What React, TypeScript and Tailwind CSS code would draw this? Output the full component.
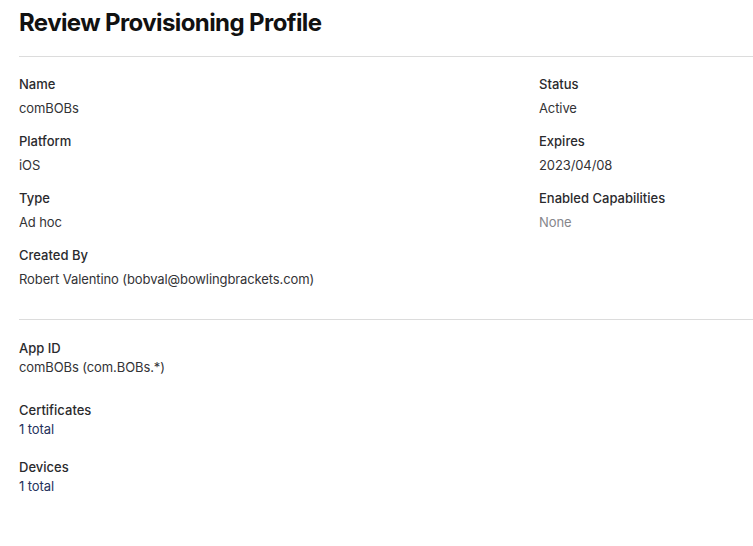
export default function App() {
  const font = { fontFamily: "Inter, 'Noto Sans', sans-serif" };
  const Item = ({ label, value, muted }: { label: string; value: string; muted?: boolean }) => (
    <div className="flex flex-col gap-[4px]">
      <div className="text-[13px] leading-[20px] font-medium text-[#2a2a2d]">{label}</div>
      <div className={`text-[13px] leading-[20px] tracking-[-0.1px] ${muted ? "text-[#86868b]" : "text-[#333336]"}`}>{value}</div>
    </div>
  );
  return (
    <div className="min-h-[546px] w-[753px] bg-white pl-[19px]" style={font}>
      <h1 className="pt-[9px] text-[24px] leading-[28px] font-bold text-[#111] tracking-[-0.6px]">Review Provisioning Profile</h1>
      <div className="mt-[19px] h-px bg-[#dcdcdc]" />
      <div className="mt-[17px] flex">
        <div className="w-[520px] flex flex-col gap-[13px]">
          <Item label="Name" value="comBOBs" />
          <Item label="Platform" value="iOS" />
          <Item label="Type" value="Ad hoc" />
          <Item label="Created By" value="Robert Valentino (bobval@bowlingbrackets.com)" />
        </div>
        <div className="flex flex-col gap-[13px]">
          <Item label="Status" value="Active" />
          <Item label="Expires" value="2023/04/08" />
          <Item label="Enabled Capabilities" value="None" muted />
        </div>
      </div>
      <div className="mt-[30px] h-px bg-[#dcdcdc]" />
      <div className="mt-[18px] flex flex-col">
        <div className="text-[13px] leading-[20px] font-medium text-[#2a2a2d]">App ID</div>
        <div className="text-[13px] leading-[19px] tracking-[-0.1px] text-[#333336]">comBOBs (com.BOBs.*)</div>
        <div className="mt-[23px] text-[13px] leading-[20px] font-medium text-[#2a2a2d]">Certificates</div>
        <div className="text-[13px] leading-[19px] tracking-[-0.1px] text-[#26325c]">1 total</div>
        <div className="mt-[18px] text-[13px] leading-[20px] font-medium text-[#2a2a2d]">Devices</div>
        <div className="text-[13px] leading-[18px] tracking-[-0.1px] text-[#26325c]">1 total</div>
      </div>
    </div>
  );
}
